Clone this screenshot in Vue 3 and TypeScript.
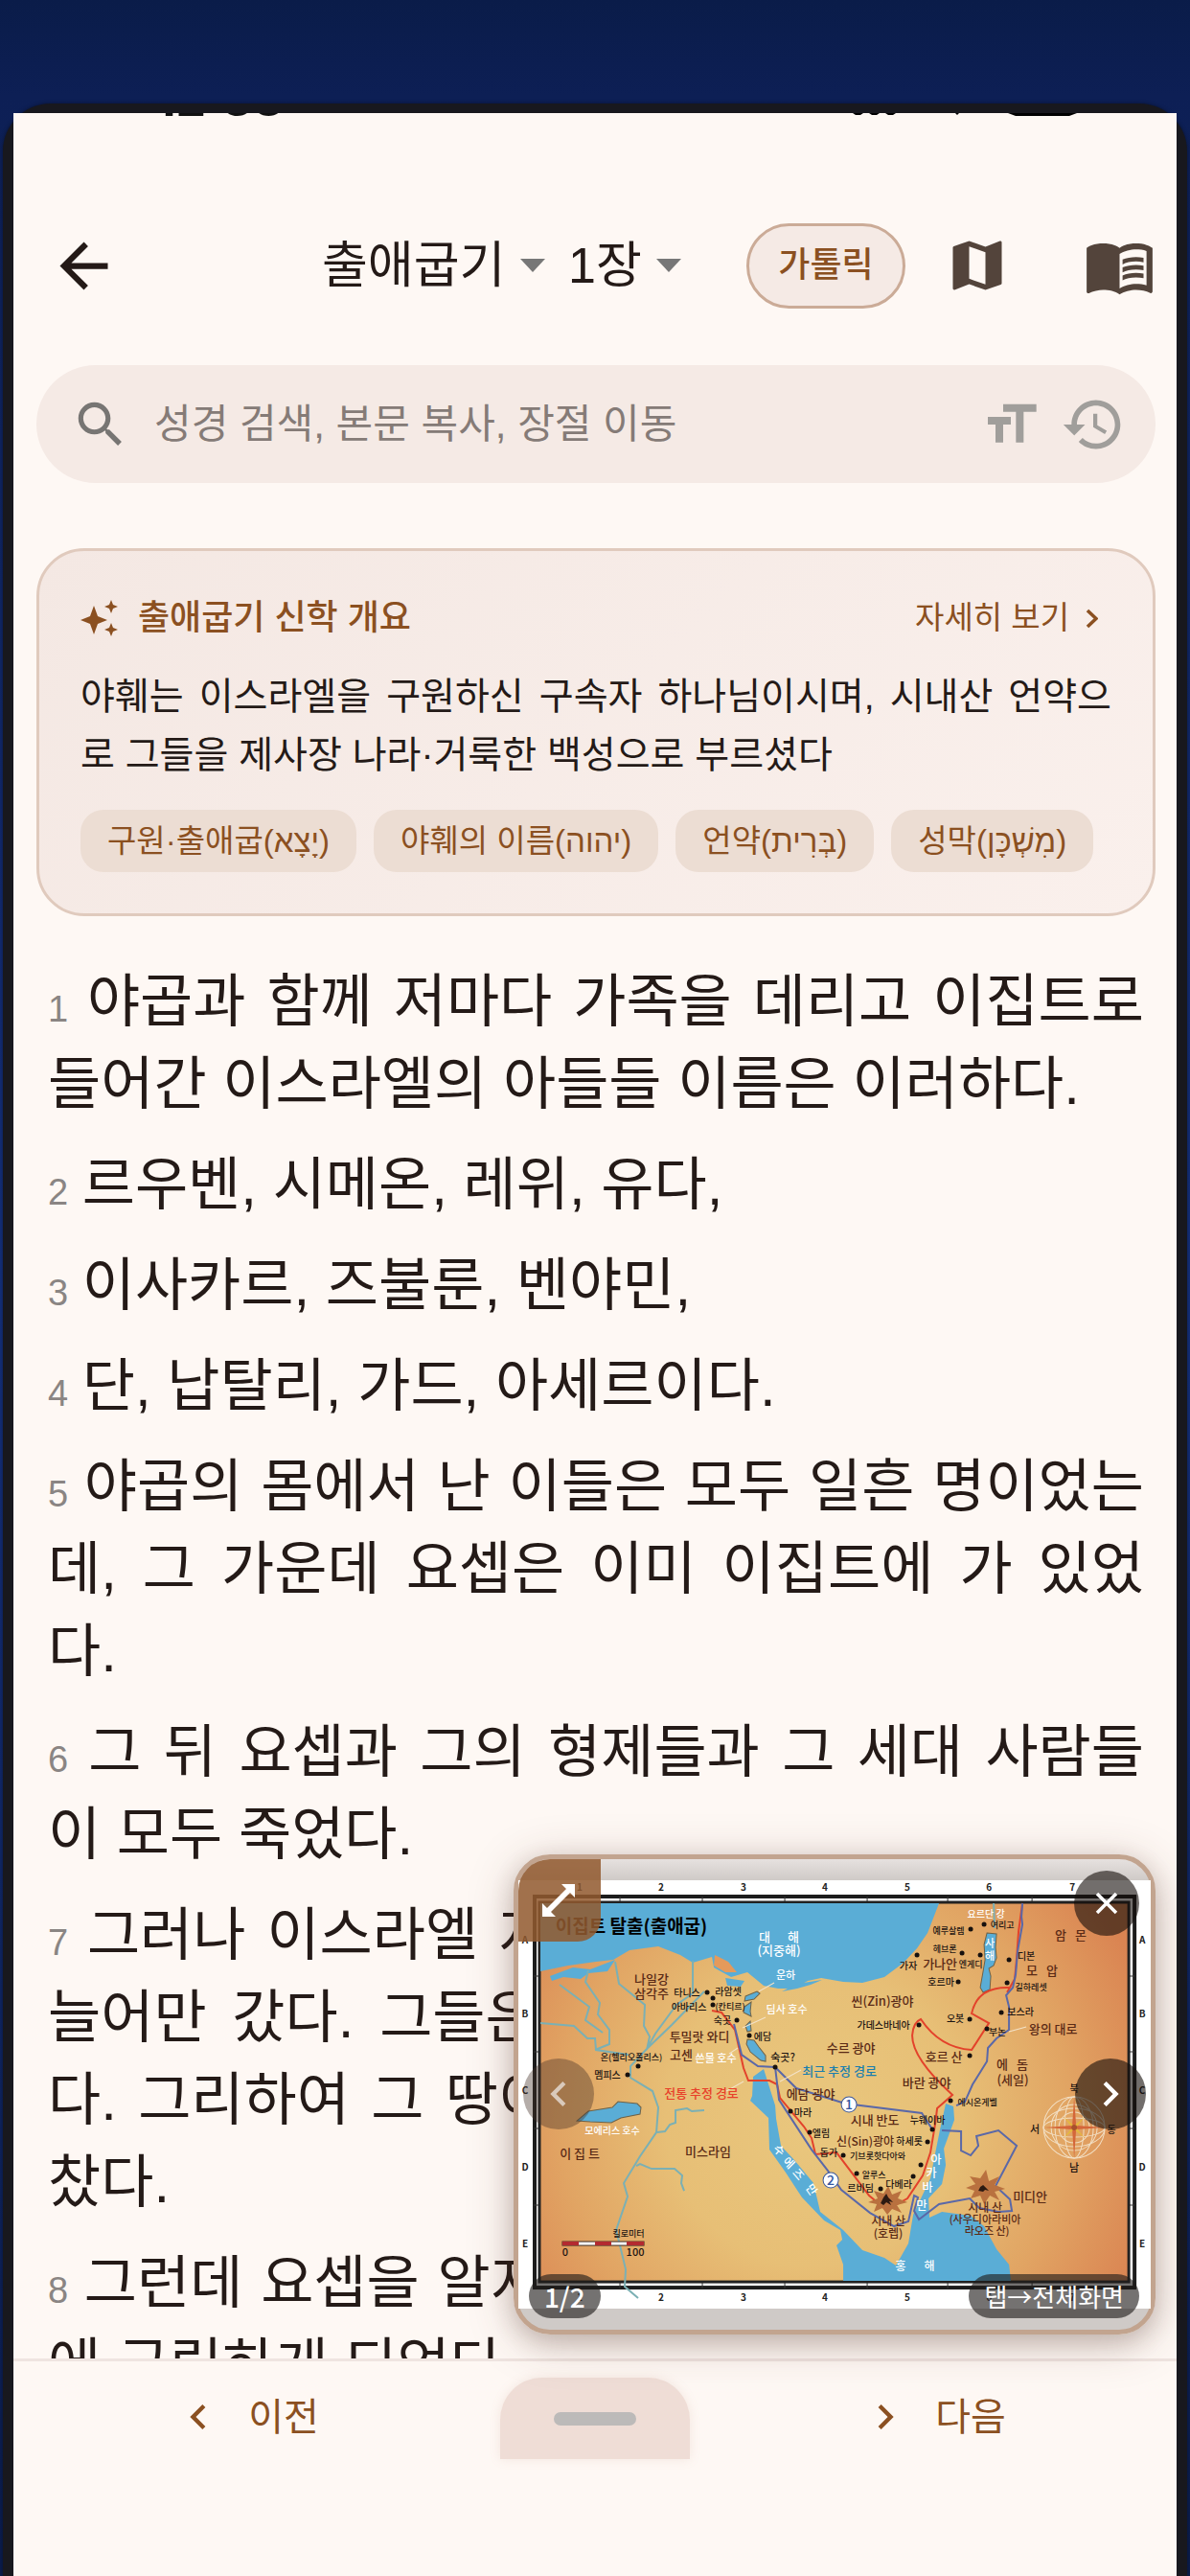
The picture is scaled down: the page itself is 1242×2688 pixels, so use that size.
<script setup lang="ts">
import { ref } from 'vue'

interface Verse {
  n: number
  lines: string[]
}

interface MapLabel {
  x: number
  y: number
  t: string
  s: number
  c?: string
  r?: number
}

const verses: Verse[] = [
  { n: 1, lines: ['야곱과 함께 저마다 가족을 데리고 이집트로', '들어간 이스라엘의 아들들 이름은 이러하다.'] },
  { n: 2, lines: ['르우벤, 시메온, 레위, 유다,'] },
  { n: 3, lines: ['이사카르, 즈불룬, 벤야민,'] },
  { n: 4, lines: ['단, 납탈리, 가드, 아세르이다.'] },
  { n: 5, lines: ['야곱의 몸에서 난 이들은 모두 일흔 명이었는', '데, 그 가운데 요셉은 이미 이집트에 가 있었', '다.'] },
  { n: 6, lines: ['그 뒤 요셉과 그의 형제들과 그 세대 사람들', '이 모두 죽었다.'] },
  {
    n: 7,
    lines: [
      '그러나 이스라엘 자손들은 점점 더 번성하며',
      '늘어만 갔다. 그들은 번성하여 더욱더 강해졌',
      '다. 그리하여 그 땅이 이스라엘 자손들로 가득',
      '찼다.',
    ],
  },
  { n: 8, lines: ['그런데 요셉을 알지 못하는 새 임금이 이집트', '에 군림하게 되었다.'] },
]

const chips: string[] = ['구원·출애굽(יָצָא)', '야훼의 이름(יהוה)', '언약(בְּרִית)', '성막(מִשְׁכָּן)']

const query = ref('')
const book = ref('출애굽기')
const chapter = ref('1장')

const W = '#ffffff'
const B = '#5a2a16'
const labels: MapLabel[] = [
  { x: 798, y: 2026, t: '대', s: 13, c: W },
  { x: 828, y: 2026, t: '해', s: 13, c: W },
  { x: 813, y: 2040, t: '(지중해)', s: 13, c: W },
  { x: 820, y: 2065, t: '운하', s: 11, c: W },
  { x: 821, y: 2101, t: '딤사 호수', s: 11, c: W },
  { x: 680, y: 2070, t: '나일강', s: 13, c: B },
  { x: 680, y: 2085, t: '삼각주', s: 13, c: B },
  { x: 717, y: 2083, t: '타니스', s: 10 },
  { x: 760, y: 2082, t: '라암셋', s: 10 },
  { x: 762, y: 2097, t: '(칸티르)', s: 9 },
  { x: 719, y: 2098, t: '아바리스', s: 10 },
  { x: 754, y: 2112, t: '숙곳', s: 10 },
  { x: 796, y: 2129, t: '에담', s: 10 },
  { x: 730, y: 2130, t: '투밀랏 와디', s: 13, c: B },
  { x: 711, y: 2149, t: '고센', s: 13, c: B },
  { x: 747, y: 2152, t: '쓴물 호수', s: 11, c: W },
  { x: 817, y: 2151, t: '숙곳?', s: 11 },
  { x: 659, y: 2150, t: '온(헬리오폴리스)', s: 9 },
  { x: 634, y: 2169, t: '멤피스', s: 10 },
  { x: 732, y: 2189, t: '전통 추정 경로', s: 13, c: '#e8402a' },
  { x: 876, y: 2166, t: '최근 추정 경로', s: 13, c: '#1b7fae' },
  { x: 888, y: 2142, t: '수르 광야', s: 13, c: B },
  { x: 846, y: 2190, t: '에담 광야', s: 13, c: B },
  { x: 967, y: 2178, t: '바란 광야', s: 13, c: B },
  { x: 921, y: 2093, t: '씬(Zin)광야', s: 13, c: B },
  { x: 922, y: 2117, t: '가데스바네아', s: 10 },
  { x: 1029, y: 2001, t: '요르단 강', s: 10, c: W },
  { x: 990, y: 2018, t: '예루살렘', s: 9 },
  { x: 1046, y: 2012, t: '여리고', s: 9 },
  { x: 986, y: 2037, t: '헤브론', s: 9 },
  { x: 948, y: 2055, t: '가자', s: 10 },
  { x: 981, y: 2054, t: '가나안', s: 13, c: B },
  { x: 1013, y: 2053, t: '엔게디', s: 9 },
  { x: 982, y: 2072, t: '호르마', s: 10 },
  { x: 1033, y: 2032, t: '사', s: 11, c: W },
  { x: 1033, y: 2045, t: '해', s: 11, c: W },
  { x: 1071, y: 2045, t: '디본', s: 10 },
  { x: 1077, y: 2061, t: '모', s: 13, c: B },
  { x: 1098, y: 2061, t: '압', s: 13, c: B },
  { x: 1107, y: 2024, t: '암', s: 13, c: B },
  { x: 1128, y: 2024, t: '몬', s: 13, c: B },
  { x: 1076, y: 2077, t: '길하레셋', s: 9 },
  { x: 1065, y: 2103, t: '보스라', s: 10 },
  { x: 997, y: 2110, t: '오봇', s: 10 },
  { x: 1041, y: 2124, t: '부논', s: 10 },
  { x: 1099, y: 2122, t: '왕의 대로', s: 13, c: B },
  { x: 985, y: 2151, t: '호르 산', s: 13, c: B },
  { x: 1046, y: 2159, t: '에', s: 13, c: B },
  { x: 1067, y: 2159, t: '돔', s: 13, c: B },
  { x: 1057, y: 2175, t: '(세일)', s: 13, c: B },
  { x: 1020, y: 2197, t: '에시온게벨', s: 9 },
  { x: 913, y: 2217, t: '시내 반도', s: 13, c: B },
  { x: 968, y: 2216, t: '누웨이바', s: 10 },
  { x: 903, y: 2239, t: '신(Sin)광야', s: 12, c: B },
  { x: 949, y: 2238, t: '하세롯', s: 10 },
  { x: 916, y: 2253, t: '기브롯핫다아와', s: 9 },
  { x: 838, y: 2208, t: '마라', s: 10 },
  { x: 857, y: 2230, t: '엘림', s: 10 },
  { x: 865, y: 2250, t: '돕가', s: 10 },
  { x: 912, y: 2273, t: '알루스', s: 9 },
  { x: 938, y: 2283, t: '다베라', s: 10 },
  { x: 898, y: 2287, t: '르비딤', s: 10 },
  { x: 927, y: 2322, t: '시내 산', s: 12, c: B },
  { x: 927, y: 2335, t: '(호렙)', s: 12, c: B },
  { x: 1028, y: 2308, t: '시내 산', s: 12, c: B },
  { x: 1028, y: 2320, t: '(사우디아라비아', s: 11, c: B },
  { x: 1030, y: 2332, t: '라오즈 산)', s: 11, c: B },
  { x: 1075, y: 2297, t: '미디안', s: 13, c: B },
  { x: 940, y: 2369, t: '홍', s: 12, c: W },
  { x: 970, y: 2369, t: '해', s: 12, c: W },
  { x: 639, y: 2227, t: '모에리스 호수', s: 10, c: W },
  { x: 605, y: 2252, t: '이 집 트', s: 13, c: B },
  { x: 739, y: 2250, t: '미스라임', s: 13, c: B },
  { x: 656, y: 2334, t: '킬로미터', s: 9 },
  { x: 590, y: 2354, t: '0', s: 11 },
  { x: 663, y: 2354, t: '100', s: 11 },
  { x: 1121, y: 2183, t: '북', s: 10 },
  { x: 1121, y: 2266, t: '남', s: 11 },
  { x: 1080, y: 2226, t: '서', s: 11 },
  { x: 1160, y: 2226, t: '동', s: 10 },
  { x: 813, y: 2248, t: '수', s: 12, c: W, r: 40 },
  { x: 823, y: 2261, t: '에', s: 12, c: W, r: 45 },
  { x: 833, y: 2273, t: '즈', s: 12, c: W, r: 50 },
  { x: 847, y: 2289, t: '만', s: 12, c: W, r: 55 },
  { x: 977, y: 2258, t: '아', s: 12, c: W },
  { x: 972, y: 2272, t: '카', s: 12, c: W },
  { x: 968, y: 2287, t: '바', s: 12, c: W },
  { x: 962, y: 2306, t: '만', s: 12, c: W },
]

const dots: number[][] = [
  [738, 2079], [744, 2085], [744, 2092], [769, 2108], [782, 2124], [809, 2157], [666, 2156], [655, 2165],
  [1013, 2013], [1027, 2008], [1004, 2038], [1023, 2040], [957, 2040], [1000, 2068], [1053, 2045], [1051, 2069],
  [1045, 2100], [1012, 2107], [1030, 2117], [959, 2113], [1012, 2145], [992, 2192], [973, 2222], [968, 2235],
  [825, 2203], [845, 2225], [880, 2249], [894, 2268], [919, 2284], [961, 2259], [953, 2271],
]

const columns: number[][] = [[605, 1], [690, 2], [776, 3], [861, 4], [947, 5], [1032, 6], [1119, 7]]
const rows: [number, string][] = [[2028, 'A'], [2105, 'B'], [2185, 'C'], [2265, 'D'], [2345, 'E']]
const tickX: number[] = [647, 733, 819, 905, 989, 1077]
const tickY: number[] = [2062, 2141, 2221, 2301]
</script>

<template>
  <div class="page">
    <div class="device">
      <main class="screen">
        <div class="status" aria-hidden="true">
          <span class="clock">12:38</span>
          <svg class="signals" viewBox="0 0 236 3">
            <path d="M0 0h11l-3 2h-5zM17 0h11l-3 2h-5zM34 0h11l-3 2h-5zM107 0h4l-2 2zM162 0h72l-8 3h-56z" fill="#000" />
          </svg>
        </div>

        <header class="topbar">
          <button class="icon-btn" type="button" aria-label="뒤로">
            <svg class="i75" viewBox="0 0 24 24" fill="#241a17"><path d="M20 11H7.830l5.590-5.590L12 4l-8 8 8 8 1.410-1.410L7.830 13H20v-2z" /></svg>
          </button>
          <div class="pickers">
            <label class="picker">
              <select v-model="book" aria-label="성경 책"><option>출애굽기</option></select>
              <svg class="caret" viewBox="0 0 26 14"><path d="M0 0h26L13 14z" fill="#777" /></svg>
            </label>
            <label class="picker">
              <select v-model="chapter" aria-label="장"><option>1장</option></select>
              <svg class="caret" viewBox="0 0 26 14"><path d="M0 0h26L13 14z" fill="#777" /></svg>
            </label>
          </div>
          <button class="version" type="button">가톨릭</button>
          <button class="icon-btn map-btn" type="button" aria-label="지도">
            <svg class="i68" viewBox="0 0 24 24" fill="#53443b"><path d="M20.500 3l-.16.03L15 5.100 9 3 3.360 4.900c-.21.07-.36.25-.36.48V20.500c0 .28.22.5.5.5l.16-.03L9 18.900l6 2.100 5.640-1.900c.21-.07.36-.25.36-.48V3.500c0-.28-.22-.5-.5-.5zM15 19l-6-2.110V5l6 2.110V19z" /></svg>
          </button>
          <button class="icon-btn" type="button" aria-label="책 보기">
            <svg class="i75" viewBox="0 0 24 24" fill="#53443b"><path d="M21 5c-1.110-.35-2.330-.5-3.500-.5-1.950 0-4.050.4-5.500 1.500-1.450-1.100-3.550-1.500-5.500-1.500S2.450 4.900 1 6v14.650c0 .25.25.5.5.5.1 0 .15-.05.25-.05C3.100 20.450 5.050 20 6.500 20c1.950 0 4.050.4 5.500 1.500 1.350-.85 3.800-1.500 5.500-1.500 1.650 0 3.350.3 4.750 1.050.1.050.15.050.25.050.25 0 .5-.25.5-.5V6c-.6-.45-1.250-.75-2-1zm0 13.500c-1.100-.35-2.300-.5-3.500-.5-1.700 0-4.150.65-5.500 1.500V8c1.350-.85 3.800-1.500 5.500-1.500 1.200 0 2.400.15 3.500.5v11.500z" /><path d="M17.500 10.500c.88 0 1.730.09 2.500.26V9.240c-.79-.15-1.640-.24-2.500-.24-1.700 0-3.240.29-4.500.83v1.660c1.130-.64 2.700-.99 4.500-.99zM13 12.490v1.660c1.130-.64 2.700-.99 4.500-.99.88 0 1.730.09 2.500.26V11.900c-.79-.15-1.640-.24-2.500-.24-1.700 0-3.240.3-4.500.83zM17.500 14.330c-1.700 0-3.240.29-4.500.83v1.660c1.130-.64 2.700-.99 4.500-.99.88 0 1.730.09 2.500.26v-1.520c-.79-.16-1.640-.24-2.500-.24z" /></svg>
          </button>
        </header>

        <form class="search" role="search" @submit.prevent>
          <svg class="i62" viewBox="0 0 24 24" fill="#777573"><path d="M15.500 14h-.79l-.28-.27C15.410 12.590 16 11.110 16 9.500 16 5.910 13.090 3 9.500 3S3 5.910 3 9.500 5.910 16 9.500 16c1.610 0 3.090-.59 4.230-1.570l.27.28v.79l5 4.990L20.490 19l-4.990-5zm-6 0C7.010 14 5 11.990 5 9.500S7.010 5 9.500 5 14 7.010 14 9.500 11.990 14 9.500 14z" /></svg>
          <input v-model="query" type="text" aria-label="성경 검색" placeholder="성경 검색, 본문 복사, 장절 이동" />
          <button class="icon-btn" type="button" aria-label="글자 크기">
            <svg class="i64" viewBox="0 0 24 24" fill="#a09e9b"><path d="M9 4v3h5v12h3V7h5V4H9zm-6 8h3v7h3v-7h3V9H3v3z" /></svg>
          </button>
          <button class="icon-btn" type="button" aria-label="검색 기록">
            <svg class="i68" viewBox="0 0 24 24" fill="#a09e9b"><path d="M13 3c-4.970 0-9 4.030-9 9H1l3.890 3.890.07.14L9 12H6c0-3.870 3.130-7 7-7s7 3.130 7 7-3.130 7-7 7c-1.930 0-3.680-.79-4.940-2.060l-1.420 1.420C8.270 19.990 10.510 21 13 21c4.970 0 9-4.030 9-9s-4.030-9-9-9zm-1 5v5l4.280 2.540.72-1.210-3.500-2.080V8H12z" /></svg>
          </button>
        </form>

        <section class="card">
          <div class="card-head">
            <svg class="spark" viewBox="0 0 40 40" fill="#8b5021"><path d="M14 7l4 11 10 4-10 4-4 11-4-11-10-4 10-4zM32 1l2 5 5 2-5 2-2 5-2-5-5-2 5-2zM32 25l2 5 5 2-5 2-2 5-2-5-5-2 5-2z" /></svg>
            <h2>출애굽기 신학 개요</h2>
            <button class="more" type="button">
              자세히 보기
              <svg class="more-chev" viewBox="0 0 13 21"><path d="M2 2l9 8.500-9 8.500" fill="none" stroke="#8b5021" stroke-width="3.600" /></svg>
            </button>
          </div>
          <p class="summary">야훼는 이스라엘을 구원하신 구속자 하나님이시며, 시내산 언약으로 그들을 제사장 나라·거룩한 백성으로 부르셨다</p>
          <ul class="chips">
            <li v-for="c in chips" :key="c">{{ c }}</li>
          </ul>
        </section>

        <article class="verses">
          <p v-for="v in verses" :key="v.n">
            <span v-for="(line, i) in v.lines" :key="i" class="line"><span v-if="i === 0" class="num">{{ v.n + ' ' }}</span>{{ line }}</span>
          </p>
        </article>

        <nav class="bottom">
          <button class="step prev" type="button">
            <svg class="i52" viewBox="0 0 24 24" fill="#8b5021"><path d="M15.410 7.410L14 6l-6 6 6 6 1.410-1.410L10.830 12z" /></svg>
            이전
          </button>
          <button class="handle" type="button" aria-label="메뉴 열기"><span></span></button>
          <button class="step" type="button">
            <svg class="i52" viewBox="0 0 24 24" fill="#8b5021"><path d="M10 6L8.590 7.410 13.170 12l-4.580 4.590L10 18l6-6z" /></svg>
            다음
          </button>
        </nav>

        <aside class="map-panel" aria-label="지도">
          <svg class="map" viewBox="541 1962 660 447" role="img" aria-label="이집트 탈출 지도">
            <defs>
              <radialGradient id="land" gradientUnits="userSpaceOnUse" cx="850" cy="2210" r="370">
                <stop offset="0" stop-color="#e9c77e" />
                <stop offset="0.420" stop-color="#e7bf76" />
                <stop offset="0.720" stop-color="#e1a463" />
                <stop offset="1" stop-color="#da8452" />
              </radialGradient>
            </defs>
            <rect x="541" y="1962" width="660" height="447" fill="#fff" />
            <rect x="558" y="1979" width="626" height="408" fill="#fff" stroke="#1c1c1c" stroke-width="4" />
            <path v-for="x in tickX" :key="'x' + x" :d="`M${x} 1979v6M${x} 2382v6`" stroke="#333" stroke-width="1" />
            <path v-for="y in tickY" :key="'y' + y" :d="`M557 ${y}h6M1178 ${y}h6`" stroke="#333" stroke-width="1" />
            <rect x="563" y="1985" width="615" height="396" fill="url(#land)" stroke="#222" stroke-width="3" />
            <g fill="#5aadd6">
              <path d="M564 1986H980L968 2017 957 2033 943 2048 923 2063 900 2069 880 2068 857 2064 843 2067 828 2075 812 2075 797 2072 780 2058 763 2063 752 2057 745 2053 743 2042 723 2048 710 2040 687 2031 657 2035 640 2045 622 2047 593 2051 564 2057z" />
              <path d="M574 2062l24-9 18 2 26-10-8 12-20 2-8 6-18-2-12 4z" />
              <path d="M797 2159l-11 8-1 20-2 5 19 18 1 33 17 24 17 26 23 24 17 10 2 10-6 6 7 20 0 17H1055l-2-17-13-16-13-24-14-11-30-4-13 6-1-20 14-15 4-20-2-17 11-30-1-14-8-3-6 27-5 25-5 26-18 38-5 30-13 23-12-8-23-8-20-21-24-19-7-30-20-24-14-15-5-28-1-14z" />
              <path d="M602 2213l12-10 25-4 6-6 20 2 4 4-1 7-20 4-10 5-22-1z" stroke="#6e6248" />
              <path d="M1030 2017l10 1-1 14 1 11-3 8-5 3 2 8-1 14-7 3-3-5 3-17 2-12-1-16z" stroke="#6e6248" />
              <path d="M778 2083l12-5 3 2-6 6-10 2zM777 2094l7-5-1 10 1 5-8-4zM778 2114l5-5 1 10-4 1zM780 2128l7 1 5 7 7 9 0 6-5-1-11-9-4-8z" stroke="#6e6248" />
              <path d="M757 2064l20 3-4 6-14-1z" />
            </g>
            <path d="M746 2040l14 7 9 11-12 0-12-7z" fill="#e59a5b" />
            <path d="M816 2078l16-8 26-4-12 5-14 4z" fill="#5aadd6" />
            <g fill="none" stroke="#7bb0b4" stroke-width="2">
              <path d="M584 2071l31 23-4 14 18 13M614 2056l-3 12 15 22-2 12 12 16 0 15-15 6M642 2047l4 23 27 22-1 22 6 11-3 14M723 2046l0 34-17 12-22 30-9 16M675 2138l26-25 34-35M564 2111l35 3 14 13 8 0 1 12 34 5M675 2138l-17 18 0 12 23 14 6 17-2 26-17 25-17 28 4 14-12 35 4 16 6 25-1 18 14 12" />
              <path d="M686 2225l8-1 5-7 6-2 0-13 12-2 5 3 13-1M664 2260l4-2 12 5h24l8 7-1 8 3 8M1037 1986l1 26" />
            </g>
            <g fill="none" stroke="#e3422b" stroke-width="2">
              <path d="M743 2098l10 2 14 18 9 40 5 13 22 0 8 4 3 14 25 30 8 12 4 17 22-2 34 45 18 15 22-12 16-24 8-24 5-30 2-16 16-14q-42-38-42-62 1-14 9-17 20 30 53 32l18-28-18-10q6-28 39-27" />
              <path d="M1051 2079l8-14 2-22 2-28 4-29" />
            </g>
            <g fill="none" stroke="#5a68a8" stroke-width="2">
              <path d="M766 2112l8 32 17 12 18 1M809 2157l4 34 34 52 17 22 14 20 30 24 25 14 15-5 6-27 4 2-4 14 5 9 21-16 32-6 10 10 20 4 14-1-2-12-15-14 22-42-19-16-23 6 2 10-8 10-10-5 0-20-20-1M809 2157l22 22 51 16 80 10 11 17" />
              <path d="M1067 1986l-1 14 1 8-5 28-2 24-3 14-7 8 3 12v24l-13 9-9 10-1 14-15 24-8 18-9 4" />
            </g>
            <path d="M808 2069l-16 9M799 2105l-24 11M770 2137l-9 6M836 2160l-22 12M776 2172l-18 10M1071 2115l-18 5" stroke="#f3e2c8" stroke-width="1" />
            <g fill="#b9713f">
              <path d="M927 2281l4 9 10-4-4 8 10 4-11 3 5 8-10-4-5 6-5-7-9 4 3-8-9-2 10-4-4-8 10 3z" />
              <path d="M1029 2264l3 12 11-5-5 9 11 4-11 3 5 9-10-5-6 9-4-9-10 3 4-8-9-3 10-4-6-8 11 2z" />
            </g>
            <path d="M919 2299l3-6 3-4 2 4 5 5-4-1 2 4-5-3-3 3zM1021 2286l2-4 3-2 3 3 3 3-4-1-2 2z" fill="#2c1a12" />
            <g fill="none" stroke="#f2dfc4" stroke-width="1">
              <circle cx="1121" cy="2220" r="32" />
              <circle cx="1121" cy="2220" r="24" />
              <circle cx="1121" cy="2220" r="16" />
              <ellipse cx="1121" cy="2220" rx="20" ry="32" />
              <ellipse cx="1121" cy="2220" rx="10" ry="32" />
              <ellipse cx="1121" cy="2220" rx="32" ry="20" />
              <ellipse cx="1121" cy="2220" rx="32" ry="10" />
            </g>
            <path d="M1121 2188l2 30 30 2-30 2-2 30-2-30-30-2 30-2z" fill="#d4663a" />
            <path d="M1110 2209l11 9 11-9-9 11 9 11-11-9-11 9 9-11z" fill="#e5b93e" />
            <circle cx="1121" cy="2220" r="3" fill="#a8502c" />
            <rect x="587" y="2339" width="85" height="4" fill="#fff" stroke="#3a2a20" />
            <path d="M587 2339h17v4h-17zM621 2339h17v4h-17zM654 2339h18v4h-18z" fill="#b32a30" />
            <circle v-for="(d, i) in dots" :key="i" :cx="d[0]" :cy="d[1]" r="2.500" fill="#17110e" />
            <g stroke="#3d5a9c" fill="#fff">
              <circle cx="886" cy="2196" r="8" />
              <circle cx="867" cy="2275" r="8" />
            </g>
            <g class="map-text" text-anchor="middle">
              <text x="886" y="2201" font-size="14" fill="#3457a0">1</text>
              <text x="867" y="2280" font-size="14" fill="#3457a0">2</text>
              <text x="659" y="2017" font-size="19" class="map-title">이집트 탈출(출애굽)</text>
              <text
                v-for="(l, i) in labels"
                :key="'l' + i"
                :x="l.x"
                :y="l.y"
                :font-size="l.s"
                :fill="l.c ?? '#1d1512'"
                :transform="l.r ? `rotate(${l.r} ${l.x} ${l.y - 4})` : undefined"
              >{{ l.t }}</text>
              <g font-size="10" fill="#222" class="grid-marks">
                <text v-for="c in columns" :key="'ct' + c[1]" :x="c[0]" y="1973">{{ c[1] }}</text>
                <text v-for="c in columns" :key="'cb' + c[1]" :x="c[0]" y="2401">{{ c[1] }}</text>
                <text v-for="r in rows" :key="'rl' + r[1]" x="548" :y="r[0]">{{ r[1] }}</text>
                <text v-for="r in rows" :key="'rr' + r[1]" x="1192" :y="r[0]">{{ r[1] }}</text>
              </g>
            </g>
          </svg>
          <button class="expand" type="button" aria-label="확대">
            <svg viewBox="0 0 34 34" width="34" height="34"><path d="M20 0h14v14l-5-5L9 29l5 5H0V20l5 5L25 5z" fill="#fff" /></svg>
          </button>
          <button class="round close" type="button" aria-label="닫기">
            <svg viewBox="0 0 24 24" width="24" height="24"><path d="M2 2l20 20M22 2L2 22" stroke="#fff" stroke-width="3.500" /></svg>
          </button>
          <button class="round left" type="button" aria-label="이전 지도">
            <svg viewBox="0 0 24 24" width="52" height="52" fill="#d9c9bb"><path d="M15.410 7.410L14 6l-6 6 6 6 1.410-1.410L10.830 12z" /></svg>
          </button>
          <button class="round right" type="button" aria-label="다음 지도">
            <svg viewBox="0 0 24 24" width="52" height="52" fill="#fff"><path d="M10 6L8.590 7.410 13.170 12l-4.580 4.590L10 18l6-6z" /></svg>
          </button>
          <span class="pill count">1/2</span>
          <span class="pill hint">탭→전체화면</span>
        </aside>
      </main>
    </div>
  </div>
</template>

<style>
body {
  margin: 0;
  background: #0d2055;
}
</style>

<style scoped>
.page {
  box-sizing: border-box;
  height: 100vh;
  display: flex;
  padding: 108px 3px 0;
  background: linear-gradient(#0a1c49 0, #0d1f55 100px, #14307c 50%, #0b1c4c 100%);
  font-family: "Liberation Sans", "Noto Sans CJK KR", sans-serif;
  color: #241a17;
}
.page * {
  box-sizing: border-box;
}
.device {
  flex: 1;
  display: flex;
  min-width: 0;
  padding: 10px 11px 0;
  border-radius: 50px 50px 0 0;
  background: #18181e;
  box-shadow: 0 0 4px rgba(0, 0, 0, 0.4);
}
.screen {
  position: relative;
  flex: 1;
  min-width: 0;
  display: flex;
  flex-direction: column;
  overflow: hidden;
  background: #fef8f4;
}
button,
select,
input {
  margin: 0;
  padding: 0;
  border: 0;
  background: none;
  font: inherit;
  color: inherit;
}
svg {
  display: block;
  flex: none;
}
.i75 { width: 75px; height: 75px; }
.i68 { width: 68px; height: 68px; }
.i64 { width: 64px; height: 64px; }
.i62 { width: 62px; height: 62px; }
.i52 { width: 52px; height: 52px; }

.status {
  flex: none;
  height: 3px;
  display: flex;
  justify-content: space-between;
  align-items: flex-end;
  overflow: hidden;
  padding: 0 102px 0 148px;
}
.clock {
  font: bold 50px/60px "Inter", sans-serif;
  height: 48px;
  color: #111;
}
.signals {
  width: 236px;
  height: 3px;
}

.topbar {
  flex: none;
  display: flex;
  align-items: center;
  height: 312px;
  padding: 0 22px 0 36px;
}
.icon-btn {
  display: flex;
}
.pickers {
  display: flex;
  gap: 24px;
  margin-left: auto;
  margin-right: 68px;
}
.picker {
  display: flex;
  align-items: center;
  gap: 15px;
}
.picker select {
  appearance: none;
  font-size: 52px;
  line-height: 76px;
}
.caret {
  width: 26px;
  height: 14px;
}
.version {
  width: 166px;
  height: 89px;
  border: 3px solid #cbab97;
  border-radius: 45px;
  background: #f5eae5;
  color: #8b5021;
  font-size: 36px;
  line-height: 52px;
  font-weight: 500;
}
.map-btn {
  margin: 0 77px 0 41px;
}

.search {
  flex: none;
  display: flex;
  align-items: center;
  height: 123px;
  margin: -52px 22px 0 24px;
  padding: 0 31px 0 36px;
  border-radius: 62px;
  background: #f5eae5;
}
.search input {
  flex: 1;
  min-width: 0;
  height: 64px;
  margin-left: 25px;
  outline: 0;
  font-size: 42px;
}
.search input::placeholder {
  color: #857b77;
  opacity: 1;
}
.search .icon-btn:last-child {
  margin-left: 20px;
}

.card {
  flex: none;
  margin: 68px 22px 0 24px;
  padding: 44px 43px 43px;
  border: 3px solid #e0cabd;
  border-radius: 50px;
  background: linear-gradient(135deg, #f4e8e3, #faf0ec);
}
.card-head {
  display: flex;
  align-items: center;
  height: 52px;
}
.spark {
  width: 40px;
  height: 40px;
}
.card h2 {
  margin: 0 auto 0 20px;
  font-size: 36px;
  line-height: 52px;
  font-weight: 500;
  color: #8b5021;
}
.more {
  display: flex;
  align-items: center;
  gap: 17px;
  margin-right: 14px;
  font-size: 33px;
  line-height: 52px;
  color: #8b5021;
}
.more-chev {
  width: 13px;
  height: 21px;
}
.summary {
  margin: 25px 0 0;
  font-size: 39px;
  line-height: 61px;
  text-align: justify;
}
.chips {
  display: flex;
  gap: 18px;
  margin: 27px 0 0;
  padding: 0;
  list-style: none;
}
.chips li {
  height: 65px;
  padding: 0 28px;
  border-radius: 24px;
  background: #ecddd3;
  color: #8b5021;
  font-size: 33px;
  line-height: 65px;
  white-space: nowrap;
}

.verses {
  flex: 1;
  min-height: 0;
  overflow: hidden;
  padding: 47px 34px 0 36px;
}
.verses p {
  margin: 0 0 19px;
  font-size: 60px;
  line-height: 86px;
}
.line {
  display: block;
  text-align-last: justify;
}
.line:last-child {
  text-align-last: left;
}
.num {
  margin-right: 4px;
  font-size: 38px;
  line-height: 1;
  color: #8a8583;
}

.bottom {
  flex: none;
  display: grid;
  grid-template-columns: 1fr 198px 1fr;
  align-items: start;
  height: 227px;
  padding-top: 17px;
  border-top: 3px solid #efe4e0;
}
.step {
  display: flex;
  align-items: center;
  justify-content: center;
  gap: 26px;
  height: 82px;
  font-size: 40px;
  line-height: 60px;
  color: #8b5021;
}
.prev {
  padding-right: 22px;
}
.handle {
  display: flex;
  align-items: center;
  justify-content: center;
  height: 85px;
  border-radius: 44px 44px 0 0;
  background: #efddd6;
  box-shadow: 0 0 12px rgba(180, 130, 110, 0.15);
}
.handle span {
  width: 86px;
  height: 14px;
  border-radius: 7px;
  background: #bcbab9;
}

.map-panel {
  position: absolute;
  right: 22px;
  bottom: 252px;
  width: 55.2%;
  padding: 22px 0;
  border: 5px solid #c2a48f;
  border-radius: 38px;
  background: linear-gradient(#e6e1df, #cfcac7 22px);
  box-shadow: 0 8px 48px rgba(90, 50, 40, 0.25), 0 8px 24px rgba(60, 40, 30, 0.2);
}
.map {
  width: 100%;
  height: auto;
}
.map-text {
  font-family: "Noto Sans CJK KR", sans-serif;
  font-weight: 500;
}
.map-title,
.grid-marks {
  font-weight: 700;
}
.expand {
  position: absolute;
  top: 0;
  left: 0;
  display: flex;
  align-items: center;
  justify-content: center;
  width: 86px;
  height: 86px;
  padding: 0 2px 0 0;
  border-radius: 33px 0 24px 0;
  background: rgba(146, 90, 46, 0.86);
}
.round {
  position: absolute;
  display: flex;
  align-items: center;
  justify-content: center;
  border-radius: 50%;
  background: rgba(20, 14, 10, 0.6);
}
.close {
  top: 12px;
  right: 12px;
  width: 68px;
  height: 68px;
}
.left,
.right {
  top: 50%;
  width: 74px;
  height: 74px;
  margin-top: -37px;
}
.left {
  left: 5px;
  background: rgba(70, 50, 40, 0.4);
}
.right {
  right: 5px;
}
.pill {
  position: absolute;
  bottom: 12px;
  height: 46px;
  padding: 0 16px;
  border-radius: 23px;
  background: rgba(30, 28, 26, 0.62);
  color: #fff;
  font-family: "Noto Sans CJK KR", sans-serif;
  font-size: 26px;
  line-height: 46px;
}
.count {
  left: 11px;
  font-size: 28px;
  font-weight: 500;
}
.hint {
  right: 12px;
}
</style>
